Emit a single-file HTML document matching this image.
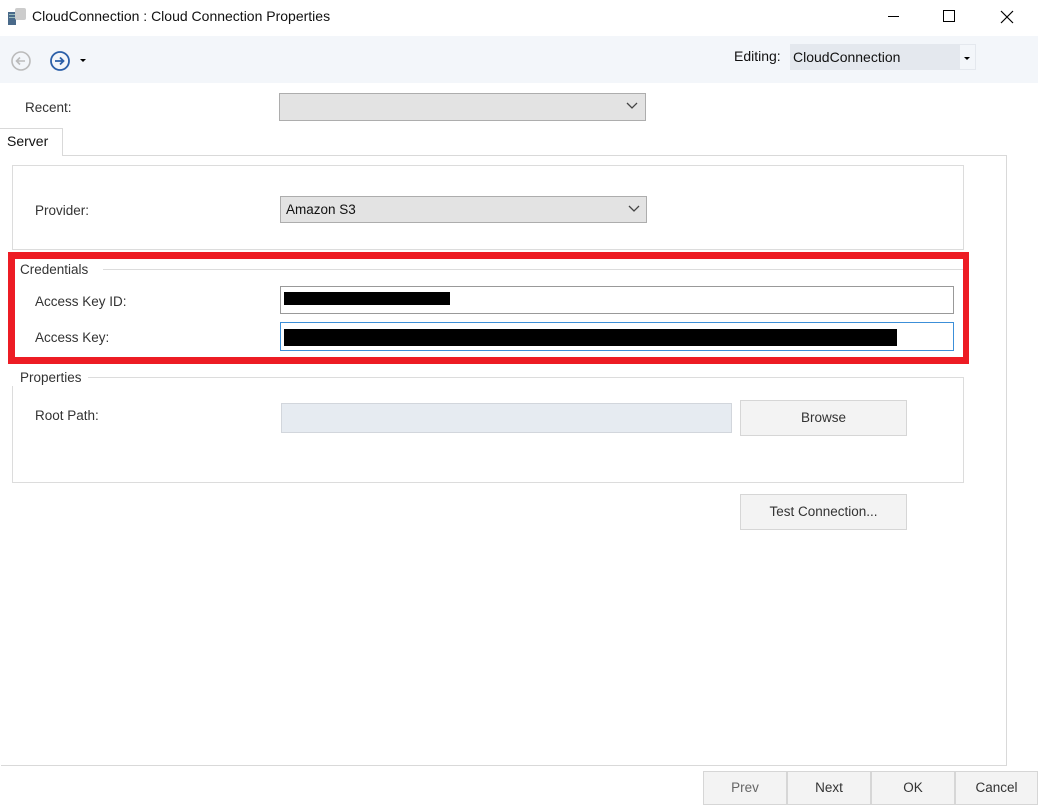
<!DOCTYPE html>
<html><head><style>
*{box-sizing:border-box;margin:0;padding:0}
body{width:1038px;height:805px;background:#fff;position:relative;overflow:hidden;font-family:"Liberation Sans",sans-serif;font-size:13.5px;color:#222}
.a{position:absolute}
.lbl{position:absolute;color:#333;font-size:13.5px}
.btn{position:absolute;background:#f3f3f3;border:1px solid #d6d6d6;text-align:center;color:#333}
.inp{position:absolute;background:#fff;border:1px solid #999}
</style></head><body>
<!-- title bar -->
<svg class="a" style="left:8px;top:8px" width="20" height="18"><rect x="0" y="4" width="8" height="13" fill="#4a6a8a"/><rect x="1" y="6" width="6" height="1" fill="#9bb"/><rect x="1" y="9" width="6" height="1" fill="#9bb"/><rect x="7" y="0" width="11" height="12" fill="#ccc" rx="2"/></svg>
<div class="a" style="left:32px;top:8px;font-size:14px;color:#111">CloudConnection : Cloud Connection Properties</div>
<div class="a" style="left:888px;top:16px;width:11px;height:1px;background:#000"></div>
<div class="a" style="left:943px;top:10px;width:12px;height:12px;border:1px solid #000"></div>
<svg class="a" style="left:1000px;top:10px" width="14" height="14"><path d="M1 1L13 13M13 1L1 13" stroke="#000" stroke-width="1.2"/></svg>
<!-- toolbar -->
<div class="a" style="left:0;top:36px;width:1038px;height:47px;background:#f3f6fa"></div>
<svg class="a" style="left:10px;top:50px" width="22" height="22"><circle cx="11" cy="11" r="9" fill="none" stroke="#bbb" stroke-width="1.6"/><path d="M15 11H7M10 7.5L6.5 11L10 14.5" fill="none" stroke="#bbb" stroke-width="1.6"/></svg>
<svg class="a" style="left:49px;top:50px" width="22" height="22"><circle cx="11" cy="11" r="9" fill="none" stroke="#2b5fa8" stroke-width="1.8"/><path d="M6 11H14M11 7.5L14.5 11L11 14.5" fill="none" stroke="#2b5fa8" stroke-width="1.8"/></svg>
<div class="a" style="left:80px;top:59px;border-left:3px solid transparent;border-right:3px solid transparent;border-top:3px solid #000"></div>
<div class="a" style="left:734px;top:48px;font-size:14px;color:#111">Editing:</div>
<div class="a" style="left:790px;top:44px;width:186px;height:26px;background:#e4e8ee"></div>
<div class="a" style="left:960px;top:45px;width:15px;height:24px;background:#f3f6fa"></div>
<div class="a" style="left:793px;top:49px;font-size:14px;color:#111">CloudConnection</div>
<div class="a" style="left:964px;top:57px;border-left:3px solid transparent;border-right:3px solid transparent;border-top:3px solid #000"></div>
<!-- recent -->
<div class="lbl" style="left:25px;top:100px">Recent:</div>
<div class="a" style="left:279px;top:93px;width:367px;height:28px;background:#e3e3e3;border:1px solid #adadad"></div>
<svg class="a" style="left:626px;top:102px" width="12" height="8"><path d="M1 1L6 6L11 1" fill="none" stroke="#444" stroke-width="1.3"/></svg>
<!-- tab -->
<div class="a" style="left:1px;top:155px;width:1006px;height:611px;border:1px solid #d9d9d9;border-left:none"></div>
<div class="a" style="left:0;top:128px;width:63px;height:28px;background:#fff;border:1px solid #d9d9d9;border-bottom:none;border-left:none"></div>
<div class="a" style="left:7px;top:133px;font-size:14px;color:#111">Server</div>
<!-- provider group -->
<div class="a" style="left:12px;top:165px;width:952px;height:85px;border:1px solid #dcdcdc"></div>
<div class="lbl" style="left:35px;top:203px">Provider:</div>
<div class="a" style="left:280px;top:196px;width:367px;height:27px;background:#e3e3e3;border:1px solid #adadad"></div>
<div class="a" style="left:286px;top:202px;color:#111">Amazon S3</div>
<svg class="a" style="left:628px;top:205px" width="12" height="8"><path d="M1 1L6 6L11 1" fill="none" stroke="#444" stroke-width="1.3"/></svg>
<!-- credentials -->
<div class="a" style="left:8px;top:252px;width:961px;height:112px;border:7px solid #ed1c24;border-right-width:6px"></div>
<div class="a" style="left:103px;top:269px;width:860px;height:1px;background:#dcdcdc"></div>
<div class="lbl" style="left:20px;top:262px">Credentials</div>
<div class="lbl" style="left:35px;top:294px">Access Key ID:</div>
<div class="inp" style="left:280px;top:286px;width:674px;height:28px;border-color:#999"></div>
<div class="a" style="left:284px;top:292px;width:166px;height:13px;background:#000"></div>
<div class="lbl" style="left:35px;top:330px">Access Key:</div>
<div class="inp" style="left:280px;top:322px;width:674px;height:29px;border-color:#3c8fd8"></div>
<div class="a" style="left:284px;top:329px;width:613px;height:17px;background:#000"></div>
<!-- properties -->
<div class="a" style="left:12px;top:377px;width:952px;height:106px;border:1px solid #dcdcdc"></div>
<div class="a" style="left:8px;top:370px;width:80px;height:16px;background:#fff"></div>
<div class="lbl" style="left:20px;top:370px">Properties</div>
<div class="lbl" style="left:35px;top:408px">Root Path:</div>
<div class="a" style="left:281px;top:403px;width:451px;height:30px;background:#e6ebf1;border:1px solid #d2d6dc"></div>
<div class="btn" style="left:740px;top:400px;width:167px;height:36px;line-height:34px">Browse</div>
<div class="btn" style="left:740px;top:494px;width:167px;height:36px;line-height:34px">Test Connection...</div>
<!-- bottom -->
<div class="btn" style="left:703px;top:771px;width:84px;height:34px;line-height:32px;color:#666">Prev</div>
<div class="btn" style="left:787px;top:771px;width:84px;height:34px;line-height:32px">Next</div>
<div class="btn" style="left:871px;top:771px;width:84px;height:34px;line-height:32px">OK</div>
<div class="btn" style="left:955px;top:771px;width:83px;height:34px;line-height:32px">Cancel</div>
</body></html>
